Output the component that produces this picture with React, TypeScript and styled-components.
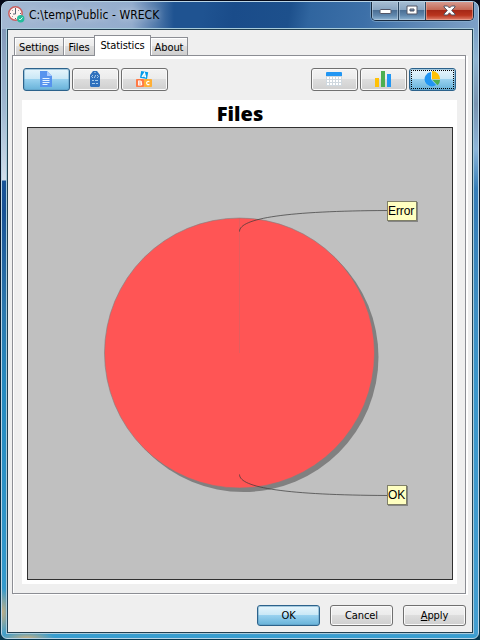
import React from "react";
import styled, { createGlobalStyle, css } from "styled-components";

const Global = createGlobalStyle`
  * { box-sizing: border-box; }
  body { margin: 0; overflow: hidden; background: #062c46; }
`;

const Frame = styled.div`
  width: 480px;
  height: 640px;
  padding: 1px;
  background: linear-gradient(#050918 0, #08192e 40%, #07384f 100%);
  font-family: "DejaVu Sans Condensed", "Noto Sans", sans-serif;
  font-size: 11px;
  color: #000;
`;

const Win = styled.div`
  width: 478px;
  height: 638px;
  border: 1px solid #b9d4e6;
  border-radius: 7px 7px 6px 6px;
  padding: 0 4px 4px;
  overflow: hidden;
  background:
    radial-gradient(ellipse 12px 24px at 0 610px, #c3ae84 0, transparent 100%),
    radial-gradient(ellipse 28px 7px at 25px 636px, #c3ae84 0, transparent 100%),
    linear-gradient(90deg, #a3b8d2 0, #93accd 130px, #93accd00 172px) 0 0 / 178px 27px no-repeat,
    linear-gradient(100deg, #1f5391 0, #1f5391 200px, #1a4c8a 230px, #1d508c 285px, #30659f 305px, #3d70a8 360px, #7398c0 450px, #7ea2c8 476px) 0 0 / 100% 27px no-repeat,
    linear-gradient(#8399b9 0, #a1b9d2 80px, #d1deeb 151px, transparent 152px) 0 27px / 6px 153px no-repeat,
    linear-gradient(#7ba0c6 0, #8fb4d2 30px, #7893b0 75px, #8db6da 120px, #3f88bf00 160px) 100% 27px / 6px 160px no-repeat,
    linear-gradient(90deg, transparent 50%, #4b9fd290 50%) 0 27px / 100% 606px no-repeat,
    linear-gradient(#1e599b 0, #185296 33%, #2c78ae 48%, #258ac0 60%, #389ed0 100%);
`;

const TitleBar = styled.header`
  height: 26px;
  display: flex;
  align-items: flex-start;
  padding-left: 2px;
`;

const AppIcon = styled.svg`
  width: 17px;
  height: 17px;
  margin-top: 4px;
`;

const Caption = styled.span`
  margin: 5px 0 0 4px;
  font-size: 12px;
  line-height: 17px;
  white-space: nowrap;
  letter-spacing: 0.06px;
  text-shadow: 0 0 7px #ffffffb0;
`;

const CaptionButtons = styled.div`
  display: flex;
  width: 103px;
  height: 20px;
  margin-left: auto;
  margin-top: -1px;
  border: 1px solid #172a40;
  border-top: 0;
  border-radius: 0 0 5px 5px;
  overflow: hidden;
  box-shadow: 0 0 0 1px #92b8d488;
`;

const CaptionButton = styled.div<{ $close?: boolean }>`
  flex: ${p => (p.$close ? "0 0 47px" : "1")};
  display: flex;
  justify-content: center;
  align-items: center;
  border-right: ${p => (p.$close ? "0" : "1px solid #29445f")};
  box-shadow: inset 0 0 0 1px ${p => (p.$close ? "#efad9d99" : "#c4d5e488")};
  background: ${p => p.$close
    ? "linear-gradient(#d8a096 0, #c56a57 45%, #a62817 50%, #b9341e 75%, #df806c 100%)"
    : "linear-gradient(#a9bfd4 0, #8aa6c2 45%, #4b6f95 50%, #5f86ac 75%, #90b5d3 100%)"};
`;

const Client = styled.main`
  width: 468px;
  height: 606px;
  border: 1px solid #a7cbdb;
  background: #efefef;
  box-shadow: inset 0 0 0 1px #213f50;
  padding: 6px 7px 7px 5px;
  display: flex;
  flex-direction: column;
`;

const Tabs = styled.nav`
  display: flex;
  align-items: flex-end;
  height: 20px;
  padding-left: 2px;
  position: relative;
  z-index: 1;
`;

const Tab = styled.div<{ $width: number; $active?: boolean }>`
  width: ${p => p.$width}px;
  height: 18px;
  border: 1px solid #8c8e94;
  border-bottom: 0;
  box-shadow: inset 1px 1px #fff;
  background: linear-gradient(#f3f3f3 0, #ebebeb 49%, #dddddd 50%, #cfcfcf);
  line-height: 19px;
  text-align: center;
  letter-spacing: -0.1px;
  white-space: nowrap;
  & + & { margin-left: -1px; }
  ${p => p.$active && css`
    height: 21px;
    margin-bottom: -1px;
    background: #fff;
    z-index: 1;
  `}
`;

const Panel = styled.section`
  flex: none;
  width: 454px;
  height: 539px;
  border: 1px solid #8c8e94;
  box-shadow: 2px 1px #fff, inset 1px 0 #fff, inset 0 3px #fff;
  padding: 12px 8px 0 9px;
`;

const Toolbar = styled.div`
  display: flex;
  gap: 2px;
  height: 32px;
  padding: 0 1px;
`;

const Spacer = styled.div`flex: 1;`;

const Button = styled.button<{ $active?: boolean; $wide?: boolean }>`
  width: ${p => (p.$wide ? 63 : 47)}px;
  height: ${p => (p.$wide ? 21 : 23)}px;
  display: flex;
  align-items: center;
  justify-content: center;
  padding: 0;
  font: inherit;
  letter-spacing: -0.1px;
  border: 1px solid #707070;
  border-radius: 3px;
  color: #000;
  background: linear-gradient(#f3f3f3 0, #ebebeb 49%, #dddddd 50%, #cfcfcf);
  box-shadow: inset 0 0 0 1px #fafafa;
  svg { margin: 0 1px 1px 0; }
  ${p => p.$active && css`
    border-color: #2c628b;
    background: linear-gradient(#e7f5fc 0, #c8e7f6 49%, #98d1ef 50%, #67b2d9);
    box-shadow: inset 0 0 0 1px #5f9bbf80;
  `}
`;

const Focus = styled.span`
  width: 43px;
  height: 19px;
  border: 1px dotted #000;
  display: flex;
  align-items: center;
  justify-content: center;
`;

const Chart = styled.section`
  width: 435px;
  height: 484px;
  background: #fff;
  padding: 0 4px 4px 5px;
`;

const ChartTitle = styled.h1`
  margin: 0;
  height: 27px;
  font: 800 20px/27px "Open Sans", sans-serif;
  text-align: center;
`;

const Plot = styled.div`
  position: relative;
  width: 426px;
  height: 453px;
  background: #c0c0c0;
  border: 1px solid #303030;
`;

const Pie = styled.svg`
  display: block;
  width: 424px;
  height: 451px;
`;

const PieLabel = styled.div<{ $y: number; $w: number }>`
  position: absolute;
  left: 359px;
  top: ${p => p.$y}px;
  width: ${p => p.$w}px;
  height: 20px;
  border: 1px solid #808067;
  background: #ffffc0;
  box-shadow: 1px 1px #858585;
  font: 12px/18px "Liberation Sans", sans-serif;
  letter-spacing: -0.1px;
`;

const Footer = styled.footer`
  display: flex;
  justify-content: flex-end;
  gap: 10px;
  margin-top: 11px;
`;

const Clock = () => (
  <AppIcon viewBox="0 0 17 17">
    <circle cx="7.5" cy="7.5" r="6.7" fill="#fff3f0" stroke="#cb6262" strokeWidth="1.5" />
    <path d="M7.5 3v5H5M7.5 2v1M12 7.5h1M2 7.5h1M7.5 12v1M4 4l.6.6M11 4l-.6.6M4 11l.6-.6" fill="none" stroke="#596171" />
    <circle cx="12.7" cy="12.7" r="3.7" fill="#22bd9b" />
    <path d="m11 12.8 1.2 1.2 2.3-2.6" stroke="#eafff8" fill="none" />
  </AppIcon>
);

const DocumentIcon = () => (
  <svg width="16" height="16" viewBox="0 0 16 16">
    <path d="M2 0h7l5 5v11H2z" fill="#5793ee" />
    <path d="m9 0 5 5H9z" fill="#a8c9ff" />
    <path d="M4.5 7.5h7M4.5 9.5h7M4.5 11.5h7M4.5 13.5h5" stroke="#e5f3ff" />
  </svg>
);

const CodeIcon = () => (
  <svg width="16" height="16" viewBox="0 0 16 16">
    <path d="M3 4 6 0h4l3 4v11l-1 1H4l-1-1z" fill="#2f70bd" />
    <path d="m6 4-1.5 1.5L6 7m4-3 1.5 1.5L10 7M8.7 4 7.3 7" fill="none" stroke="#c7def4" strokeWidth=".8" />
    <path d="M5 9.5h2m1 0h3M5 12.5h3m1 0h2" stroke="#a9cdec" />
    <path d="M7.5 1.5h1" stroke="#d3e6f7" />
  </svg>
);

const BlocksIcon = () => (
  <svg width="16" height="16" viewBox="0 0 16 16">
    <path d="m5.2 0 7 1.3L11 8 4 6.8z" fill="#049be9" />
    <rect y="8" width="8" height="8" rx=".8" fill="#ff7945" />
    <rect x="8" y="8" width="8" height="8" rx=".8" fill="#ffaf35" />
    <path d="M6 5.8 8.5 2l1.1 4.5M7 4.8l2.4.3" fill="none" stroke="#fff" strokeWidth="1.3" />
    <path d="M2.7 10v4h1.7q1.3 0 1.3-1t-1.3-1H3h1.2q1.2 0 1.2-1t-1.2-1zM13.4 10.7c-3.7-1.7-3.7 4.4 0 2.7" fill="none" stroke="#fff" strokeWidth="1.2" />
  </svg>
);

const CalendarIcon = () => (
  <svg width="16" height="16" viewBox="0 0 16 16">
    <rect y="5" width="16" height="10" fill="#cfd8df" />
    <path d="M0 5V2q0-1 1-1h14q1 0 1 1v3z" fill="#2196f3" />
    {[6, 9, 12].map(y => [1, 4, 7, 10, 13].map(x => <rect key={`${x}-${y}`} x={x} y={y} width="2" height="2" fill="#fff" />))}
  </svg>
);

const BarsIcon = () => (
  <svg width="16" height="16" viewBox="0 0 16 16">
    <path d="M0 7h4v9H0z" fill="#ffc107" />
    <path d="M6 0h4v16H6z" fill="#4caf50" />
    <path d="M12 3h4v13h-4z" fill="#2196f3" />
  </svg>
);

const PieIcon = () => (
  <svg width="16" height="16" viewBox="0 0 16 16">
    <path d="M7 1v7.5l5 5.5A7.2 7.2 0 1 1 7 1z" fill="#2196f3" />
    <path d="M8 0a8 8 0 0 1 8 8.2H8z" fill="#ffc107" />
    <path d="M8.5 9H16a7 7 0 0 1-2.4 5.2z" fill="#4caf50" />
  </svg>
);

export default function App() {
  return (
    <>
      <Global />
      <Frame>
        <Win>
          <TitleBar>
            <Clock />
            <Caption>C:\temp\Public - WRECK</Caption>
            <CaptionButtons>
              <CaptionButton><svg width="13" height="7"><rect x="1" y="2.5" width="11" height="4" rx="1" fill="#fff" stroke="#535666" /></svg></CaptionButton>
              <CaptionButton><svg width="13" height="11"><path d="M1 1h10v8H1zM4 4v2h4V4z" fillRule="evenodd" fill="#fff" stroke="#535666" /></svg></CaptionButton>
              <CaptionButton $close><svg width="13" height="11" viewBox="0 0 13 11"><path d="M1 1h3.5l2 2 2-2H12v1L8.7 5.5 12 9v1H8.5l-2-2.2-2 2.2H1V9l3.3-3.5L1 2z" fill="#fff" stroke="#535666" /></svg></CaptionButton>
            </CaptionButtons>
          </TitleBar>
          <Client>
            <Tabs>
              <Tab $width={50}>Settings</Tab>
              <Tab $width={32}>Files</Tab>
              <Tab $width={57} $active>Statistics</Tab>
              <Tab $width={38}>About</Tab>
            </Tabs>
            <Panel>
              <Toolbar>
                <Button $active aria-label="Files"><DocumentIcon /></Button>
                <Button aria-label="Code"><CodeIcon /></Button>
                <Button aria-label="Characters"><BlocksIcon /></Button>
                <Spacer />
                <Button aria-label="Table"><CalendarIcon /></Button>
                <Button aria-label="Bar chart"><BarsIcon /></Button>
                <Button $active aria-label="Pie chart"><Focus><PieIcon /></Focus></Button>
              </Toolbar>
              <Chart>
                <ChartTitle>Files</ChartTitle>
                <Plot>
                  <Pie viewBox="28 128 424 451">
                    <circle cx="243.5" cy="357" r="135" fill="#808080" />
                    <circle cx="239.5" cy="353" r="135" fill="#f55" stroke="#808080" strokeWidth=".6" />
                    <path d="M239.5 218v135" stroke="#b07070" strokeWidth=".35" />
                    <path d="M239.5 231.5C239.5 218 288 211 387 210.5M239.5 474.5C239.5 488 288 495 387 495.5" fill="none" stroke="#383838" strokeWidth=".7" />
                  </Pie>
                  <PieLabel $y={73} $w={30}>Error</PieLabel>
                  <PieLabel $y={357} $w={20}>OK</PieLabel>
                </Plot>
              </Chart>
            </Panel>
            <Footer>
              <Button $wide $active>OK</Button>
              <Button $wide>Cancel</Button>
              <Button $wide><span><u>A</u>pply</span></Button>
            </Footer>
          </Client>
        </Win>
      </Frame>
    </>
  );
}
